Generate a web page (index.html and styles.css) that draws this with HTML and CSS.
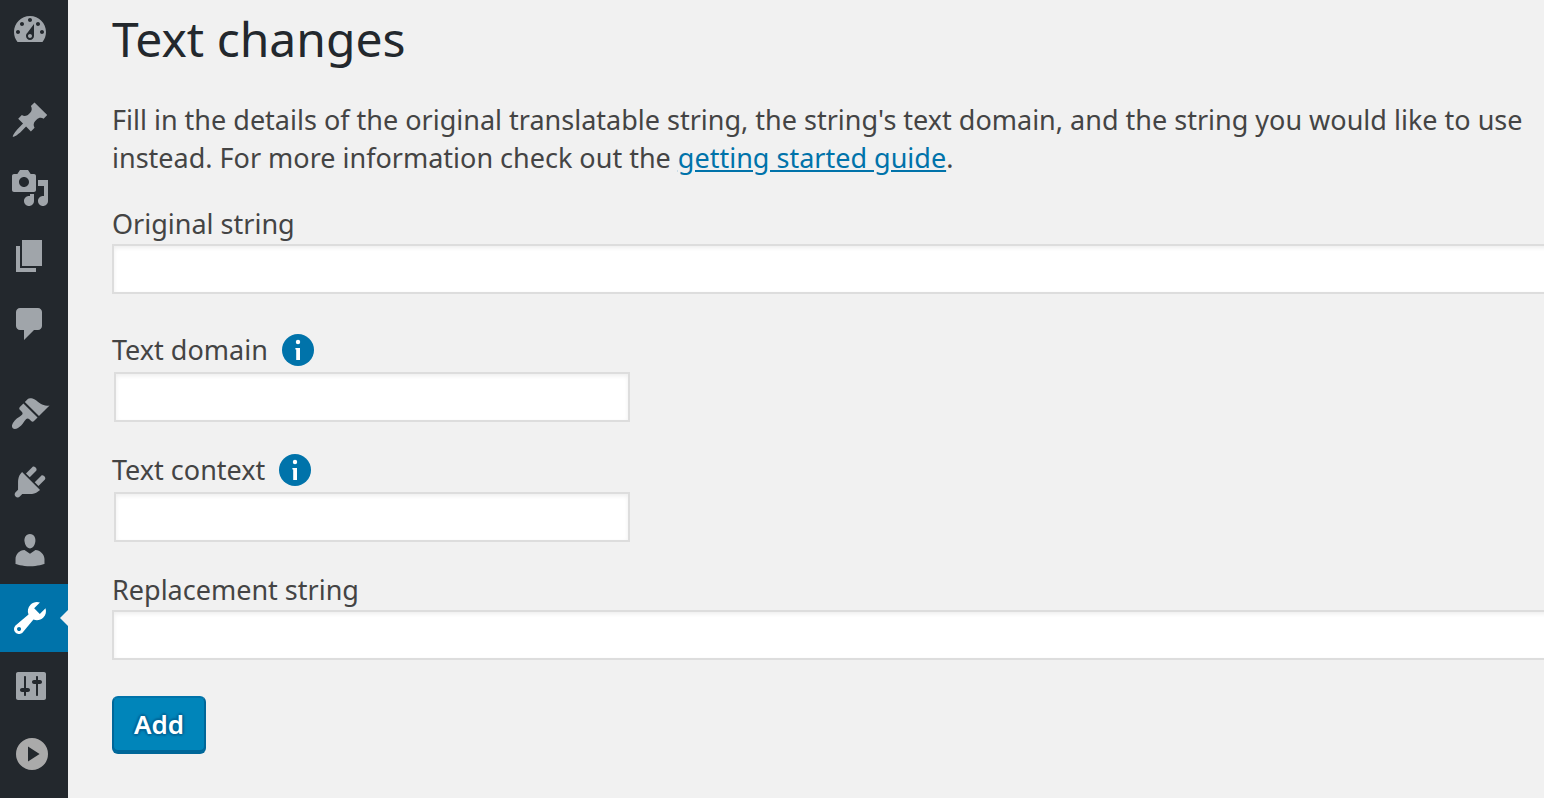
FILE: index.html
```html
<!DOCTYPE html>
<html lang="en">
	<head>
		<meta charset="utf-8">
		<title>Text changes</title>

		<link rel="stylesheet" href="styles.css">
	</head>

	<body>
		<nav class="adminMenu">
			<a href="#" class="menuItem" aria-label="Dashboard">
				<svg viewBox="0 0 20 20"><path d="M3.76 16h12.48c1.1-1.37 1.76-3.11 1.76-5 0-4.42-3.58-8-8-8s-8 3.58-8 8c0 1.89.66 3.63 1.76 5zM10 4c.55 0 1 .45 1 1s-.45 1-1 1-1-.45-1-1 .45-1 1-1zM6 6c.55 0 1 .45 1 1s-.45 1-1 1-1-.45-1-1 .45-1 1-1zm8 0c.55 0 1 .45 1 1s-.45 1-1 1-1-.45-1-1 .45-1 1-1zm-5.37 5.55L12 7v6c0 1.1-.9 2-2 2s-2-.9-2-2c0-.57.24-1.08.63-1.45zM4 10c.55 0 1 .45 1 1s-.45 1-1 1-1-.45-1-1 .45-1 1-1zm12 0c.55 0 1 .45 1 1s-.45 1-1 1-1-.45-1-1 .45-1 1-1zm-5 3c0-.55-.45-1-1-1s-1 .45-1 1 .45 1 1 1 1-.45 1-1z"/></svg>
			</a>
			<div class="separator"></div>
			<a href="#" class="menuItem" aria-label="Posts">
				<svg viewBox="0 0 20 20"><path d="M10.44 3.02l1.82-1.82 6.36 6.35-1.83 1.82c-1.05-.68-2.48-.57-3.41.36l-.75.75c-.92.93-1.04 2.35-.35 3.41l-1.83 1.82-2.41-2.41-2.8 2.79c-.42.42-3.38 2.71-3.8 2.29s1.86-3.39 2.28-3.81l2.79-2.79L4.1 9.36l1.83-1.82c1.05.69 2.48.57 3.4-.36l.75-.75c.93-.92 1.05-2.35.36-3.41z"/></svg>
			</a>
			<a href="#" class="menuItem" aria-label="Media">
				<svg viewBox="0 0 20 20"><path d="M13 11V4c0-.55-.45-1-1-1h-1.67L9 1H5L3.67 3H2c-.55 0-1 .45-1 1v7c0 .55.45 1 1 1h10c.55 0 1-.45 1-1zM7 4.5c1.38 0 2.5 1.12 2.5 2.5S8.38 9.5 7 9.5 4.5 8.38 4.5 7 5.62 4.5 7 4.5zM14 6h5v10.5c0 1.38-1.12 2.5-2.5 2.5S14 17.88 14 16.5s1.12-2.5 2.5-2.5c.17 0 .34.02.5.05V9h-3V6zm-4 8.05V13h2v3.5c0 1.38-1.12 2.5-2.5 2.5S7 17.88 7 16.5 8.12 14 9.5 14c.17 0 .34.02.5.05z"/></svg>
			</a>
			<a href="#" class="menuItem" aria-label="Pages">
				<svg viewBox="0 0 20 20"><path d="M6 15V2h10v13H6zm-1 1h8v2H3V5h2v11z"/></svg>
			</a>
			<a href="#" class="menuItem" aria-label="Comments">
				<svg viewBox="0 0 20 20"><path d="M5 2h9c1.1 0 2 .9 2 2v7c0 1.1-.9 2-2 2h-2l-5 5v-5H5c-1.1 0-2-.9-2-2V4c0-1.1.9-2 2-2z"/></svg>
			</a>
			<div class="separator"></div>
			<a href="#" class="menuItem" aria-label="Appearance">
				<svg viewBox="0 0 20 20"><path d="M14.48 11.06L7.41 3.99l1.5-1.5c.5-.56 2.3-.47 3.51.32 1.21.8 1.43 1.28 2.91 2.1 1.18.64 2.45 1.26 4.45.85zm-.71.71L6.7 4.7 4.93 6.47c-.39.39-.39 1.02 0 1.41l1.06 1.06c.39.39.39 1.03 0 1.42-.6.6-1.43 1.11-2.21 1.69-.35.26-.7.53-1.01.84C1.43 14.23.4 16.08 1.4 17.07c.99 1 2.84-.03 4.18-1.36.31-.31.58-.66.85-1.02.57-.78 1.08-1.61 1.69-2.21.39-.39 1.02-.39 1.41 0l1.06 1.06c.39.39 1.02.39 1.41 0z"/></svg>
			</a>
			<a href="#" class="menuItem" aria-label="Plugins">
				<svg viewBox="0 0 20 20"><path d="M13.11 4.36L9.87 7.6 8 5.73l3.24-3.24c.35-.34 1.05-.2 1.56.32.52.51.66 1.21.31 1.55zm-8 1.77l.91-1.12 9.01 9.01-1.19.84c-.71.71-2.63 1.16-3.82 1.16H6.14L4.9 17.26c-.59.59-1.54.59-2.12 0-.59-.58-.59-1.53 0-2.12l1.24-1.24v-3.88c0-1.13.4-3.19 1.09-3.89zm7.26 3.97l3.24-3.24c.34-.35 1.04-.21 1.55.31.52.51.66 1.21.31 1.55l-3.24 3.25z"/></svg>
			</a>
			<a href="#" class="menuItem" aria-label="Users">
				<svg viewBox="0 0 20 20"><path d="M10 9.25c-2.27 0-2.73-3.44-2.73-3.44C7 4.02 7.82 2 9.97 2c2.16 0 2.98 2.02 2.71 3.81 0 0-.41 3.44-2.68 3.44zm0 2.57L12.72 10c2.39 0 4.52 2.33 4.52 4.53v2.49s-3.65 1.13-7.24 1.13c-3.65 0-7.24-1.13-7.24-1.13v-2.49c0-2.25 1.94-4.48 4.47-4.48z"/></svg>
			</a>
			<a href="#" class="menuItem current" aria-label="Tools">
				<svg viewBox="0 0 20 20"><path d="M16.68 9.77c-1.34 1.34-3.3 1.67-4.95.99l-5.41 6.52c-.99.99-2.59.99-3.58 0s-.99-2.59 0-3.57l6.52-5.42c-.68-1.65-.35-3.61.99-4.95 1.28-1.28 3.12-1.62 4.72-1.06l-2.89 2.89 2.82 2.82 2.86-2.87c.53 1.58.18 3.39-1.08 4.65zM3.81 16.21c.4.39 1.04.39 1.43 0 .4-.4.4-1.04 0-1.43-.39-.4-1.03-.4-1.43 0-.39.39-.39 1.03 0 1.43z"/></svg>
			</a>
			<a href="#" class="menuItem" aria-label="Settings">
				<svg viewBox="0 0 20 20"><path d="M18 16V4c0-.55-.45-1-1-1H4c-.55 0-1 .45-1 1v12c0 .55.45 1 1 1h13c.55 0 1-.45 1-1zM8 11h1c.55 0 1 .45 1 1s-.45 1-1 1H8v1.5c0 .28-.22.5-.5.5s-.5-.22-.5-.5V13H6c-.55 0-1-.45-1-1s.45-1 1-1h1V5.5c0-.28.22-.5.5-.5s.5.22.5.5V11zm5-2h-1c-.55 0-1-.45-1-1s.45-1 1-1h1V5.5c0-.28.22-.5.5-.5s.5.22.5.5V7h1c.55 0 1 .45 1 1s-.45 1-1 1h-1v5.5c0 .28-.22.5-.5.5s-.5-.22-.5-.5V9z"/></svg>
			</a>
			<a href="#" class="menuItem collapse" aria-label="Collapse menu">
				<svg viewBox="0 0 20 20"><path fill-rule="evenodd" d="M11 2a8 8 0 1 0 0 16a8 8 0 1 0 0-16zM9 6.2l5.8 3.8L9 13.8z"/></svg>
			</a>
		</nav>

		<main class="content">
			<h1>Text changes</h1>
			<p>Fill in the details of the original translatable string, the string's text domain, and the string you would like to use instead. For more information check out the <a href="#">getting started guide</a>.</p>

			<form>
				<div class="field first">
					<label for="original">Original string</label>
					<input type="text" id="original" class="wide">
				</div>
				<div class="field">
					<div class="labelRow">
						<label for="domain">Text domain</label>
						<svg class="info" viewBox="0 0 32 32"><circle class="disc" cx="16" cy="16" r="16"/><circle cx="16" cy="8" r="2.2"/><path d="M13.4 14H18v12h-3.8V15.6h-.8z"/></svg>
					</div>
					<input type="text" id="domain" class="regular">
				</div>
				<div class="field">
					<div class="labelRow">
						<label for="context">Text context</label>
						<svg class="info" viewBox="0 0 32 32"><circle class="disc" cx="16" cy="16" r="16"/><circle cx="16" cy="8" r="2.2"/><path d="M13.4 14H18v12h-3.8V15.6h-.8z"/></svg>
					</div>
					<input type="text" id="context" class="regular">
				</div>
				<div class="field">
					<label for="replacement">Replacement string</label>
					<input type="text" id="replacement" class="wide">
				</div>
				<button type="button" class="addButton">Add</button>
			</form>
		</main>
	</body>
</html>
```
FILE: styles.css
```css
* {box-sizing: border-box;}

body
{
	margin: 0;
	display: flex;
	min-height: 100vh;
	background-color: #f1f1f1;
	color: #444;
	font-family: "Noto Sans", "Open Sans", sans-serif;
	font-size: 27px;
	line-height: 38px;
}

.adminMenu
{
	flex: none;
	width: 68px;
	background-color: #23282d;
}

.menuItem
{
	display: flex;
	align-items: center;
	height: 68px;
	padding-left: 10px;
}

.menuItem:first-child
{
	height: 64px;
	padding-bottom: 4px;
}

.menuItem svg
{
	width: 40px;
	height: 40px;
	fill: #a0a5aa;
}

.separator {height: 22px;}

.menuItem.current
{
	position: relative;
	background-color: #0073aa;
}

.menuItem.current svg {fill: #fff;}

.menuItem.current::after
{
	content: "";
	position: absolute;
	right: 0;
	top: 26px;
	border: 8px solid transparent;
	border-left: 0;
	border-right-color: #f1f1f1;
}

.menuItem.collapse svg {fill: #aaa;}

.content
{
	flex: 1;
	min-width: 0;
	padding: 9px 16px 40px 44px;
	overflow: hidden;
}

h1
{
	margin: 0 0 32px;
	color: #23282d;
	font-size: 48px;
	font-weight: 400;
	line-height: 60px;
}

p {margin: 0 0 29px;}

p a {color: #0073aa;}

.field
{
	display: flow-root;
	margin-bottom: 28px;
}

.field.first {margin-bottom: 38px;}

label
{
	display: block;
	padding-bottom: 2px;
	line-height: 36px;
}

.labelRow
{
	display: flex;
	align-items: center;
	gap: 14px;
}

.info
{
	width: 32px;
	height: 32px;
	margin-bottom: 2px;
	fill: #fff;
}

.info .disc {fill: #0073aa;}

input
{
	display: block;
	height: 50px;
	padding: 6px 10px;
	border: 2px solid #ddd;
	background-color: #fff;
	box-shadow: inset 0 2px 4px rgba(0, 0, 0, 0.07);
	color: #32373c;
	font: inherit;
}

/* runs on past the right edge of the content area */
.wide {width: calc(100% + 24px);}

.regular
{
	width: 516px;
	max-width: 100%;
	margin: 2px;
}

.addButton
{
	display: block;
	height: 58px;
	margin-top: 36px;
	padding: 0 20px 2px;
	border: 2px solid #006799;
	border-color: #0073aa #006799 #006799;
	border-radius: 6px;
	background-color: #0085ba;
	box-shadow: inset 0 -2px 0 #006799;
	color: #fff;
	font: inherit;
	font-size: 26px;
	font-weight: 600;
	text-shadow: 0 -2px 2px #006799, 2px 0 2px #006799, 0 2px 2px #006799, -2px 0 2px #006799;
}
```
